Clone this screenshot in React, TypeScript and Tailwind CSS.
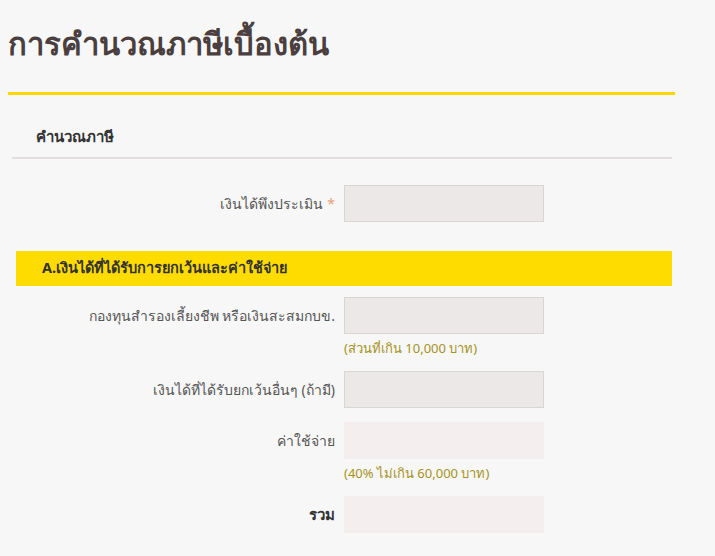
import React from 'react';

type Row = {
  label: string;
  required?: boolean;
  bold?: boolean;
  hint?: string;
  readOnly?: boolean;
};

const rows: Row[] = [
  { label: 'กองทุนสำรองเลี้ยงชีพ หรือเงินสะสมกบข.', hint: '(ส่วนที่เกิน 10,000 บาท)' },
  { label: 'เงินได้ที่ได้รับยกเว้นอื่นๆ (ถ้ามี)' },
  { label: 'ค่าใช้จ่าย', hint: '(40% ไม่เกิน 60,000 บาท)', readOnly: true },
  { label: 'รวม', bold: true, readOnly: true },
];

const FieldRow: React.FC<{ row: Row }> = ({ row }) => (
  <div className="flex items-start">
    <div
      className={`w-[335px] h-[37px] flex items-center justify-end ${
        row.bold ? 'font-bold text-[15px] text-[#333]' : 'text-[14px] text-[#555]'
      }`}
    >
      {row.label}
      {row.required && <span className="text-[#e8a07a] ml-1">*</span>}
    </div>
    <div className="ml-[9px] flex flex-col">
      <input
        readOnly={row.readOnly}
        className={`w-[200px] h-[37px] outline-none ${
          row.readOnly ? 'bg-[#f4eeee]' : 'bg-[#ece8e7] border border-[#d9d5d4]'
        }`}
      />
      {row.hint && <div className="text-[13px] text-[#a59322] mt-[5px] leading-[18px]">{row.hint}</div>}
    </div>
  </div>
);

export default function App() {
  return (
    <div className="min-h-[556px] bg-[#f7f7f7] font-['Noto_Sans','DejaVu_Sans',sans-serif] pt-[21px]">
      <h1 className="pl-[8px] text-[31px] font-bold text-[#4a3e3e] leading-[44px]">การคำนวณภาษีเบื้องต้น</h1>
      <div className="ml-[8px] w-[667px] h-[3px] bg-[#ffd700] mt-[27px]" />
      <div className="mx-[12px] w-[660px] mt-[30px] border-b-2 border-[#e2dede] pb-[9px] pl-[24px] text-[15px] font-semibold text-[#333]">
        คำนวณภาษี
      </div>
      <div className="mt-[26px]">
        <FieldRow row={{ label: 'เงินได้พึงประเมิน', required: true }} />
      </div>
      <div className="ml-[16px] w-[656px] h-[35px] bg-[#ffdc00] mt-[29px] flex items-center pl-[26px] text-[14.5px] font-bold text-[#333]">
        A.เงินได้ที่ได้รับการยกเว้นและค่าใช้จ่าย
      </div>
      <div className="mt-[11px] flex flex-col gap-[14px]">
        {rows.map((r) => (
          <FieldRow key={r.label} row={r} />
        ))}
      </div>
    </div>
  );
}
